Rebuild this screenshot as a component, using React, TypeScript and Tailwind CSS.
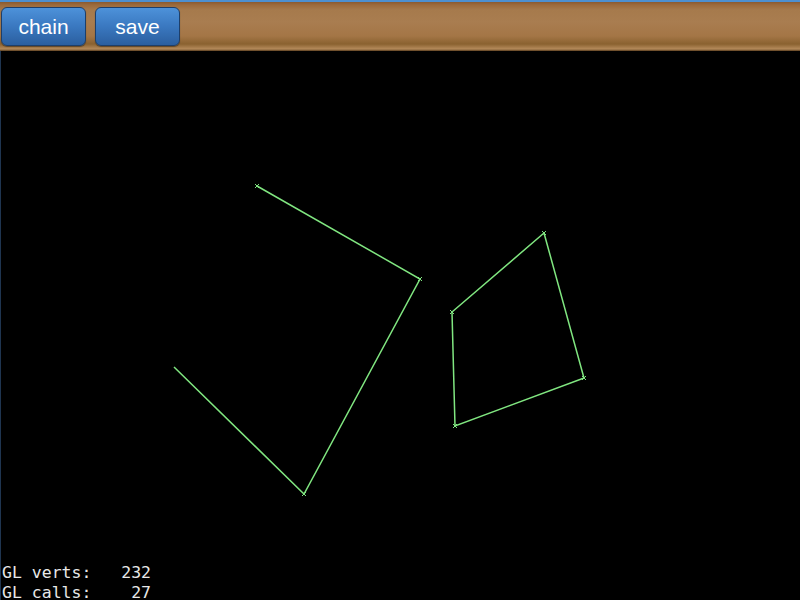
import React from "react";

const chainPts = "256,186 419,279 303,494 173,367";
const quadPts = "543,233 583,378 454,426 451,312 543,233";

const verts = [
  [256, 186],
  [419, 279],
  [303, 494],
  [543, 233],
  [583, 378],
  [454, 426],
  [451, 312],
];

function ToolButton({ label }: { label: string }) {
  return (
    <button className="h-[39px] w-[85px] rounded-[6px] border border-[#1d3f6b] bg-gradient-to-b from-[#4d92da] via-[#3a78c0] to-[#2b5f9f] text-[21px] text-white shadow-[0_1px_1px_rgba(0,0,0,0.4)] [font-family:'Liberation_Sans',Arial,sans-serif]">
      {label}
    </button>
  );
}

export default function App() {
  return (
    <div className="flex h-[600px] w-[800px] flex-col overflow-hidden bg-black">
      <div className="h-[2px] bg-[#4d8fcf]" />
      <div className="flex h-[49px] items-center gap-[9px] bg-[linear-gradient(to_bottom,#8a5a30_0px,#9c6a3c_3px,#a67a4c_8px,#a97d50_20px,#a47646_34px,#8a6230_42px,#a47a4a_45px,#b48a5a_47px,#5a3d1e_49px)] px-[1px]">
        <ToolButton label="chain" />
        <ToolButton label="save" />
      </div>
      <div className="relative flex-1 border-l border-[#1f3550]">
        <svg width="800" height="549" viewBox="0 51 800 549" className="block">
          <polyline points={chainPts} fill="none" stroke="#80e680" strokeWidth="1.5" />
          <polyline points={quadPts} fill="none" stroke="#80e680" strokeWidth="1.5" />
          {verts.map(([x, y], i) => (
            <g key={i} stroke="#80e680" strokeWidth="1">
              <line x1={x - 2} y1={y - 2} x2={x + 2} y2={y + 2} />
              <line x1={x - 2} y1={y + 2} x2={x + 2} y2={y - 2} />
            </g>
          ))}
        </svg>
        <div className="absolute left-[1px] top-[512px] text-[16.5px] leading-[20px] whitespace-pre text-[#e8e8e8] [font-family:'DejaVu_Sans_Mono',monospace]">
          <div>GL verts:   232</div>
          <div>GL calls:    27</div>
        </div>
      </div>
    </div>
  );
}
